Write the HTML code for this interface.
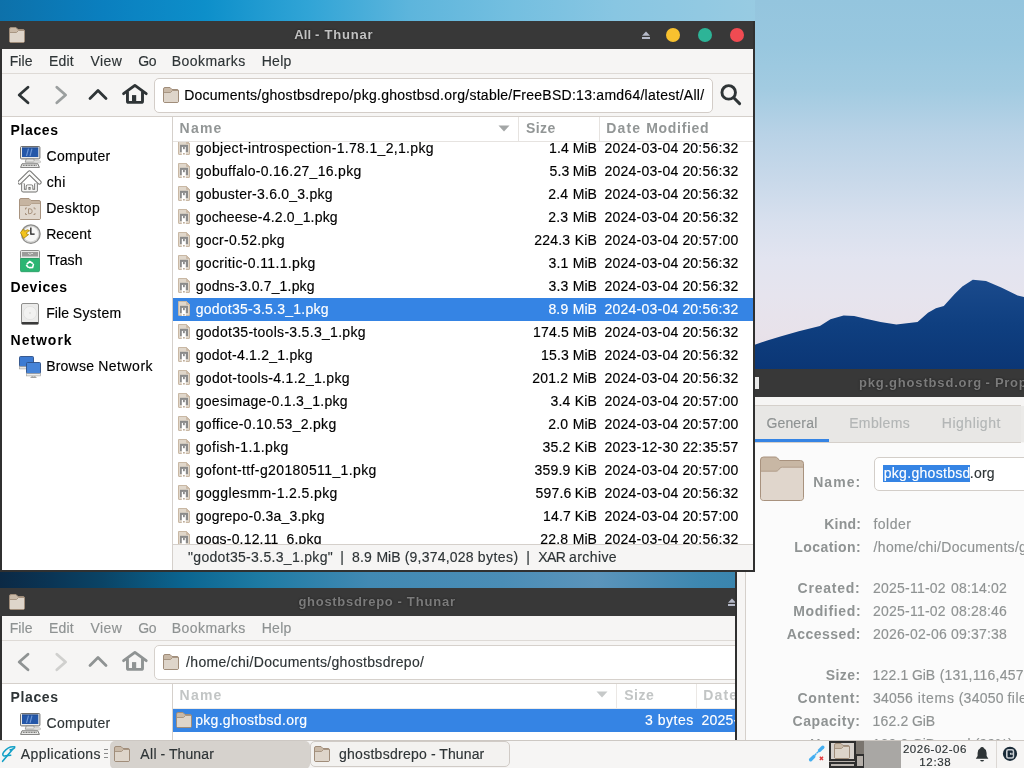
<!DOCTYPE html>
<html><head><meta charset="utf-8"><style>
html,body{margin:0;padding:0;width:1024px;height:768px;overflow:hidden;background:#0a6ea9;}
body{position:relative;font-family:"Liberation Sans",sans-serif;}
.r{position:absolute;display:block;}
.t{position:absolute;line-height:0;white-space:pre;}
#root{position:absolute;left:0;top:0;width:1024px;height:768px;overflow:hidden;will-change:transform;}
</style></head><body><div id="root">

<svg class="r" style="left:0;top:0" width="1024" height="768" viewBox="0 0 1024 768">
<defs>
<linearGradient id="gtop" x1="0" y1="0" x2="1024" y2="0" gradientUnits="userSpaceOnUse">
<stop offset="0" stop-color="#0d71aa"/><stop offset="0.1" stop-color="#0a7fbf"/><stop offset="0.2" stop-color="#0d8fca"/>
<stop offset="0.3" stop-color="#30a4d6"/><stop offset="0.4" stop-color="#5db5dc"/><stop offset="0.5" stop-color="#74bfe0"/>
<stop offset="0.6" stop-color="#88c6e2"/><stop offset="0.74" stop-color="#98cbe2"/><stop offset="0.88" stop-color="#96c6dd"/>
<stop offset="1" stop-color="#88bcda"/>
</linearGradient>
<linearGradient id="gsky" x1="0" y1="0" x2="0" y2="370" gradientUnits="userSpaceOnUse">
<stop offset="0" stop-color="#94c5de"/><stop offset="0.12" stop-color="#98c7df"/><stop offset="0.24" stop-color="#a2cbe1"/>
<stop offset="0.36" stop-color="#b8d2e6"/><stop offset="0.49" stop-color="#c9d9ea"/><stop offset="0.6" stop-color="#d8e0ee"/>
<stop offset="0.7" stop-color="#e2e4f0"/><stop offset="0.8" stop-color="#e6e4ee"/><stop offset="0.9" stop-color="#e8e2ea"/>
<stop offset="1" stop-color="#e6dde6"/>
</linearGradient>
<linearGradient id="gmtn" x1="0" y1="280" x2="0" y2="370" gradientUnits="userSpaceOnUse">
<stop offset="0" stop-color="#1a4a8c"/><stop offset="0.5" stop-color="#0f3f80"/><stop offset="1" stop-color="#0b3675"/>
</linearGradient>
<linearGradient id="ggap" x1="0" y1="0" x2="737" y2="0" gradientUnits="userSpaceOnUse">
<stop offset="0" stop-color="#0b2945"/><stop offset="0.07" stop-color="#0a3555"/><stop offset="0.14" stop-color="#0a4466"/>
<stop offset="0.25" stop-color="#0b6590"/><stop offset="0.35" stop-color="#1d7aa3"/><stop offset="0.5" stop-color="#4189b3"/>
<stop offset="0.68" stop-color="#4a8db6"/><stop offset="0.81" stop-color="#5b94bb"/><stop offset="0.95" stop-color="#3d87b0"/>
<stop offset="1" stop-color="#3a85ae"/>
</linearGradient>
</defs>
<rect x="0" y="0" width="1024" height="768" fill="url(#gtop)"/>
<rect x="755" y="0" width="269" height="370" fill="url(#gsky)"/>
<rect x="0" y="21" width="755" height="0" fill="url(#gtop)"/>
<path d="M754,344.9 L767.2,340.4 L780.4,336.5 L798.8,331.2 L819.9,325.9 L830.5,319.3 L843.6,315.4 L854.2,315.9 L864.7,318.5 L880.5,322 L896.4,324.6 L906.9,323.3 L917.5,322 L928,312.7 L935.9,308.2 L943.8,306.1 L954.4,294.3 L962.3,286.4 L972.8,279.8 L986,281.1 L1001.8,287.7 L1017.6,295.6 L1024,297 L1024,370 L754,370 Z" fill="url(#gmtn)"/>
<rect x="0" y="572" width="737" height="16" fill="url(#ggap)"/>
</svg>
<div class="r" style="left:735px;top:369px;width:289px;height:371px;background:#303030;"></div>
<div class="r" style="left:735px;top:369px;width:289px;height:28px;background:#383838;"></div>
<div class="t" style="left:859.04px;top:383px;font-size:13px;letter-spacing:0.828px;color:#7b7b7b;font-weight:bold;text-shadow:0 0 2px #1c1c1c;">pkg.ghostbsd.org</div><div class="t" style="left:985.38px;top:383px;font-size:13px;letter-spacing:0.672px;color:#7b7b7b;font-weight:bold;text-shadow:0 0 2px #1c1c1c;">-</div><div class="t" style="left:995.02px;top:383px;font-size:13px;letter-spacing:0.669px;color:#7b7b7b;font-weight:bold;text-shadow:0 0 2px #1c1c1c;">Properties</div>
<div class="r" style="left:755px;top:377px;width:4px;height:12px;background:#e8e8e8;"></div>
<div class="r" style="left:737px;top:397px;width:287px;height:343px;background:#f6f5f4;"></div>
<div class="r" style="left:746px;top:405px;width:275px;height:1px;background:#d5d0cb;"></div>
<div class="r" style="left:746px;top:406px;width:275px;height:36px;background:#e8e7e5;"></div>
<div class="r" style="left:1021px;top:406px;width:3px;height:36px;background:#ebeae8;"></div>
<div class="r" style="left:746px;top:442px;width:275px;height:1px;background:#d5d0cb;"></div>
<div class="r" style="left:746px;top:439px;width:83px;height:3px;background:#3584e4;"></div>
<div class="r" style="left:746px;top:443px;width:278px;height:297px;background:#fbfbfb;"></div>
<div class="r" style="left:745px;top:443px;width:1px;height:297px;background:#d5d0cb;"></div>
<div class="t" style="left:766.40px;top:423px;font-size:14px;letter-spacing:0.174px;color:#8f9393;-webkit-text-stroke:0.15px #8f9393;">General</div>
<div class="t" style="left:849.14px;top:423px;font-size:14px;letter-spacing:0.382px;color:#b3b6b6;-webkit-text-stroke:0.15px #b3b6b6;">Emblems</div>
<div class="t" style="left:941.84px;top:423px;font-size:14px;letter-spacing:0.505px;color:#b3b6b6;-webkit-text-stroke:0.15px #b3b6b6;">Highlight</div>
<svg class="r" style="left:760px;top:456px;" width="45" height="46" viewBox="0 0 45 46"><path d="M0.5,4 Q0.5,1 3.5,1 H15 Q16.5,1 17.5,2 L19.5,4.5 H40.5 Q43.5,4.5 43.5,7.5 V41.5 Q43.5,44.5 40.5,44.5 H3.5 Q0.5,44.5 0.5,41.5 Z" fill="#c8b7a4" stroke="#a8927e" stroke-width="1"/><path d="M1,15.2 H16 Q17.5,15.2 18.5,14 L20,12 Q21,11.2 22.5,11.2 H43 V41.5 Q43,44 40.5,44 H3.5 Q1,44 1,41.5 Z" fill="#e0d6cc"/><path d="M1,15.2 H16 Q17.5,15.2 18.5,14 L20,12 Q21,11.2 22.5,11.2 H43" fill="none" stroke="#b29f8b" stroke-width="1"/></svg>
<div class="r" style="left:874px;top:457px;width:160px;height:34px;background:#ffffff;border:1px solid #d3cec9;border-radius:5px;box-sizing:border-box;"></div>
<div class="r" style="left:883px;top:465px;width:87px;height:17px;background:#3584e4;"></div>
<div class="t" style="left:883.69px;top:473px;font-size:14px;letter-spacing:0.312px;color:#ffffff;-webkit-text-stroke:0.15px #ffffff;">pkg.ghostbsd</div>
<div class="t" style="left:969.82px;top:473px;font-size:14px;letter-spacing:0.223px;color:#2e3436;-webkit-text-stroke:0.15px #2e3436;">.org</div>
<div class="t" style="left:813.16px;top:482px;font-size:14px;letter-spacing:1.044px;color:#8f9393;font-weight:bold;">Name:</div>
<div class="t" style="left:824.16px;top:524px;font-size:14px;letter-spacing:0.250px;color:#8f9393;font-weight:bold;">Kind:</div>
<div class="t" style="left:873.40px;top:524px;font-size:14px;letter-spacing:0.500px;color:#8f9393;-webkit-text-stroke:0.15px #8f9393;">folder</div>
<div class="t" style="left:794.16px;top:547px;font-size:14px;letter-spacing:0.450px;color:#8f9393;font-weight:bold;">Location:</div>
<div class="t" style="left:873.60px;top:547px;font-size:14px;letter-spacing:0.312px;color:#8f9393;-webkit-text-stroke:0.15px #8f9393;">/home/chi/Documents/ghostbsdrepo</div>
<div class="t" style="left:797.52px;top:588px;font-size:14px;letter-spacing:0.779px;color:#8f9393;font-weight:bold;">Created:</div>
<div class="t" style="left:872.90px;top:588px;font-size:14px;letter-spacing:0.244px;color:#8f9393;-webkit-text-stroke:0.15px #8f9393;">2025-11-02</div><div class="t" style="left:951.05px;top:588px;font-size:14px;letter-spacing:0.191px;color:#8f9393;-webkit-text-stroke:0.15px #8f9393;">08:14:02</div>
<div class="t" style="left:793.16px;top:611px;font-size:14px;letter-spacing:0.648px;color:#8f9393;font-weight:bold;">Modified:</div>
<div class="t" style="left:872.90px;top:611px;font-size:14px;letter-spacing:0.244px;color:#8f9393;-webkit-text-stroke:0.15px #8f9393;">2025-11-02</div><div class="t" style="left:951.05px;top:611px;font-size:14px;letter-spacing:0.191px;color:#8f9393;-webkit-text-stroke:0.15px #8f9393;">08:28:46</div>
<div class="t" style="left:786.76px;top:634px;font-size:14px;letter-spacing:0.444px;color:#8f9393;font-weight:bold;">Accessed:</div>
<div class="t" style="left:872.90px;top:634px;font-size:14px;letter-spacing:0.244px;color:#8f9393;-webkit-text-stroke:0.15px #8f9393;">2026-02-06</div><div class="t" style="left:951.05px;top:634px;font-size:14px;letter-spacing:0.191px;color:#8f9393;-webkit-text-stroke:0.15px #8f9393;">09:37:38</div>
<div class="t" style="left:825.69px;top:675px;font-size:14px;letter-spacing:0.466px;color:#8f9393;font-weight:bold;">Size:</div>
<div class="t" style="left:872.54px;top:675px;font-size:14px;letter-spacing:0.197px;color:#8f9393;-webkit-text-stroke:0.15px #8f9393;">122.1</div><div class="t" style="left:911.90px;top:675px;font-size:14px;letter-spacing:-0.115px;color:#8f9393;-webkit-text-stroke:0.15px #8f9393;">GiB</div><div class="t" style="left:939.73px;top:675px;font-size:14px;letter-spacing:0.206px;color:#8f9393;-webkit-text-stroke:0.15px #8f9393;">(131,116,457,862</div><div class="t" style="left:1056.69px;top:675px;font-size:14px;letter-spacing:0.482px;color:#8f9393;-webkit-text-stroke:0.15px #8f9393;">bytes)</div>
<div class="t" style="left:797.52px;top:698px;font-size:14px;letter-spacing:0.688px;color:#8f9393;font-weight:bold;">Content:</div>
<div class="t" style="left:873.07px;top:698px;font-size:14px;letter-spacing:0.219px;color:#8f9393;-webkit-text-stroke:0.15px #8f9393;">34056</div><div class="t" style="left:917.66px;top:698px;font-size:14px;letter-spacing:0.713px;color:#8f9393;-webkit-text-stroke:0.15px #8f9393;">items</div><div class="t" style="left:958.73px;top:698px;font-size:14px;letter-spacing:0.240px;color:#8f9393;-webkit-text-stroke:0.15px #8f9393;">(34050</div><div class="t" style="left:1007.40px;top:698px;font-size:14px;letter-spacing:0.536px;color:#8f9393;-webkit-text-stroke:0.15px #8f9393;">files,</div><div class="t" style="left:1042.88px;top:698px;font-size:14px;letter-spacing:0.219px;color:#8f9393;-webkit-text-stroke:0.15px #8f9393;">6</div><div class="t" style="left:1055.40px;top:698px;font-size:14px;letter-spacing:0.418px;color:#8f9393;-webkit-text-stroke:0.15px #8f9393;">folders)</div>
<div class="t" style="left:792.52px;top:721px;font-size:14px;letter-spacing:0.557px;color:#8f9393;font-weight:bold;">Capacity:</div>
<div class="t" style="left:872.54px;top:721px;font-size:14px;letter-spacing:0.197px;color:#8f9393;-webkit-text-stroke:0.15px #8f9393;">162.2</div><div class="t" style="left:911.90px;top:721px;font-size:14px;letter-spacing:-0.115px;color:#8f9393;-webkit-text-stroke:0.15px #8f9393;">GiB</div>
<div class="t" style="left:810.26px;top:744px;font-size:14px;letter-spacing:0.724px;color:#8f9393;font-weight:bold;">Usage:</div>
<div class="t" style="left:872.54px;top:744px;font-size:14px;letter-spacing:0.197px;color:#8f9393;-webkit-text-stroke:0.15px #8f9393;">160.0</div><div class="t" style="left:911.90px;top:744px;font-size:14px;letter-spacing:-0.115px;color:#8f9393;-webkit-text-stroke:0.15px #8f9393;">GiB</div><div class="t" style="left:939.69px;top:744px;font-size:14px;letter-spacing:0.164px;color:#8f9393;-webkit-text-stroke:0.15px #8f9393;">used</div><div class="t" style="left:974.73px;top:744px;font-size:14px;letter-spacing:0.134px;color:#8f9393;-webkit-text-stroke:0.15px #8f9393;">(99%)</div>
<div class="r" style="left:0;top:0;width:735px;height:740px;overflow:hidden">
<div class="r" style="left:0px;top:588px;width:737px;height:152px;background:#303030;"></div>
<div class="r" style="left:0px;top:588px;width:735px;height:28px;background:#383838;"></div>
<svg class="r" style="left:9px;top:594px;" width="16" height="16" viewBox="0 0 16 16"><path d="M0.5,2 Q0.5,0.5 2,0.5 H7 L9,2.5 H14 Q15.5,2.5 15.5,4 V14 Q15.5,15.5 14,15.5 H2 Q0.5,15.5 0.5,14 Z" fill="#c9b9a7" stroke="#a08d7a" stroke-width="1"/><path d="M1,5.5 H7.5 L9.5,3.5 H15 V15 H1 Z" fill="#ded5ca"/><path d="M1,5.5 H7.5 L9.5,3.5 H15" fill="none" stroke="#a89683" stroke-width="1"/></svg>
<div class="t" style="left:298.47px;top:602px;font-size:13px;letter-spacing:0.695px;color:#7b7b7b;font-weight:bold;text-shadow:0 0 2px #1c1c1c;">ghostbsdrepo</div><div class="t" style="left:397.48px;top:602px;font-size:13px;letter-spacing:0.672px;color:#7b7b7b;font-weight:bold;text-shadow:0 0 2px #1c1c1c;">-</div><div class="t" style="left:406.86px;top:602px;font-size:13px;letter-spacing:0.826px;color:#7b7b7b;font-weight:bold;text-shadow:0 0 2px #1c1c1c;">Thunar</div>
<div class="r" style="left:2px;top:616px;width:733px;height:24px;background:#f6f5f4;"></div>
<div class="r" style="left:2px;top:640px;width:733px;height:1px;background:#dedad6;"></div>
<div class="r" style="left:2px;top:641px;width:733px;height:42px;background:#f6f5f4;"></div>
<div class="r" style="left:2px;top:683px;width:733px;height:1px;background:#d5d0cb;"></div>
<div class="t" style="left:9.69px;top:628px;font-size:14px;letter-spacing:0.113px;color:#8e9292;-webkit-text-stroke:0.15px #8e9292;">File</div>
<div class="t" style="left:48.94px;top:628px;font-size:14px;letter-spacing:0.219px;color:#8e9292;-webkit-text-stroke:0.15px #8e9292;">Edit</div>
<div class="t" style="left:90.54px;top:628px;font-size:14px;letter-spacing:0.414px;color:#8e9292;-webkit-text-stroke:0.15px #8e9292;">View</div>
<div class="t" style="left:138.20px;top:628px;font-size:14px;letter-spacing:-0.336px;color:#8e9292;-webkit-text-stroke:0.15px #8e9292;">Go</div>
<div class="t" style="left:171.74px;top:628px;font-size:14px;letter-spacing:0.444px;color:#8e9292;-webkit-text-stroke:0.15px #8e9292;">Bookmarks</div>
<div class="t" style="left:261.64px;top:628px;font-size:14px;letter-spacing:0.305px;color:#8e9292;-webkit-text-stroke:0.15px #8e9292;">Help</div>
<svg class="r" style="left:726px;top:597px;" width="12" height="12" viewBox="0 0 12 12"><path d="M2,5.7 L6,1.6 L10,5.7 Z" fill="#b6bac9"/><rect x="2" y="7" width="8" height="2" fill="#b6bac9"/></svg>
<div class="r" style="left:735px;top:588px;width:2px;height:152px;background:#303030;"></div>
<svg class="r" style="left:10px;top:647px" width="140" height="30" viewBox="10 647 140 30"><path d="M28,654.2 L19.2,662 L28,669.8" fill="none" stroke="#8f9393" stroke-width="2.8" stroke-linecap="round" stroke-linejoin="round"/><path d="M56.8,654.2 L65.6,662 L56.8,669.8" fill="none" stroke="#d0d0ce" stroke-width="2.8" stroke-linecap="round" stroke-linejoin="round"/><path d="M90,665.5 L98,657.5 L106,665.5" fill="none" stroke="#8f9393" stroke-width="2.8" stroke-linecap="round" stroke-linejoin="round"/><path d="M123.6,660.6 L134.9,652.4 L146.2,660.6" fill="none" stroke="#8f9393" stroke-width="2.9" stroke-linecap="round" stroke-linejoin="round"/><path d="M127.45,658.5 V668.2 Q127.45,669.4 128.6,669.4 H141.3 Q142.5,669.4 142.5,668.2 V658.5" fill="none" stroke="#8f9393" stroke-width="2.9" stroke-linejoin="round"/><rect x="132" y="662.1" width="4.2" height="7" fill="#8f9393"/></svg>
<div class="r" style="left:154px;top:645px;width:600px;height:35px;background:#ffffff;border:1px solid #d6d1cc;border-radius:5px;box-sizing:border-box;"></div>
<svg class="r" style="left:163px;top:654px;" width="16" height="16" viewBox="0 0 16 16"><path d="M0.5,2 Q0.5,0.5 2,0.5 H7 L9,2.5 H14 Q15.5,2.5 15.5,4 V14 Q15.5,15.5 14,15.5 H2 Q0.5,15.5 0.5,14 Z" fill="#c9b9a7" stroke="#a08d7a" stroke-width="1"/><path d="M1,5.5 H7.5 L9.5,3.5 H15 V15 H1 Z" fill="#ded5ca"/><path d="M1,5.5 H7.5 L9.5,3.5 H15" fill="none" stroke="#a89683" stroke-width="1"/></svg>
<div class="t" style="left:186.10px;top:662px;font-size:14px;letter-spacing:0.305px;color:#2e3436;-webkit-text-stroke:0.15px #2e3436;">/home/chi/Documents/ghostbsdrepo/</div>
<div class="r" style="left:2px;top:684px;width:170px;height:56px;background:#ffffff;"></div>
<div class="r" style="left:172px;top:684px;width:1px;height:56px;background:#d5d0cb;"></div>
<div class="r" style="left:173px;top:684px;width:562px;height:56px;background:#ffffff;"></div>
<div class="r" style="left:173px;top:708px;width:562px;height:1px;background:#eeebe8;"></div>
<div class="r" style="left:616px;top:684px;width:1px;height:24px;background:#ebe8e5;"></div>
<div class="r" style="left:696px;top:684px;width:1px;height:24px;background:#ebe8e5;"></div>
<div class="t" style="left:179.56px;top:695px;font-size:14px;letter-spacing:1.219px;color:#c2c5c5;font-weight:bold;">Name</div>
<svg class="r" style="left:596px;top:691px;" width="12" height="7" viewBox="0 0 12 7"><path d="M0.5,0.5 H11.5 L6,6.5 Z" fill="#c6c9c9"/></svg>
<div class="t" style="left:624.19px;top:695px;font-size:14px;letter-spacing:0.496px;color:#c2c5c5;font-weight:bold;">Size</div>
<div class="t" style="left:703.26px;top:695px;font-size:14px;letter-spacing:1.168px;color:#c2c5c5;font-weight:bold;">Date</div><div class="t" style="left:743.26px;top:695px;font-size:14px;letter-spacing:0.686px;color:#c2c5c5;font-weight:bold;">Modified</div>
<div class="t" style="left:10.56px;top:697px;font-size:14px;letter-spacing:0.607px;color:#2e3436;font-weight:bold;">Places</div>
<svg class="r" style="left:20px;top:713px;" width="23" height="23" viewBox="0 0 23 23"><rect x="0.5" y="0.5" width="19.4" height="12.4" rx="1" fill="#ececea" stroke="#6f6f6d" stroke-width="1"/><rect x="2" y="1.8" width="16.3" height="9.2" fill="#2457a8"/><path d="M8.5,2.5 L6.5,10 M12,2.5 L10,10" stroke="#6d97d6" stroke-width="1.1"/><path d="M2,1.8 H18.3" stroke="#1a3f80" stroke-width="0.8"/><path d="M6.2,13 H13.8 L14.8,16.2 H5.2 Z" fill="#e6e6e4" stroke="#8a8a88" stroke-width="0.8"/><ellipse cx="17" cy="15.8" rx="4" ry="1.3" fill="#e2e2e0" stroke="#b9b9b6" stroke-width="0.6"/><path d="M0.6,21.4 L2,17.8 H17.8 L19.4,21.4 Z" fill="#f6f6f4" stroke="#6a6a68" stroke-width="0.9"/><path d="M2.8,19.3 H17.2" stroke="#5a5a58" stroke-width="1" stroke-dasharray="1.1,0.5"/></svg>
<div class="t" style="left:46.58px;top:723px;font-size:14px;letter-spacing:0.320px;color:#2e3436;-webkit-text-stroke:0.15px #2e3436;">Computer</div>
<div class="r" style="left:173px;top:709px;width:562px;height:23px;background:#3584e4;"></div>
<svg class="r" style="left:176px;top:712px;" width="16" height="16" viewBox="0 0 16 16"><path d="M0.5,2 Q0.5,0.5 2,0.5 H7 L9,2.5 H14 Q15.5,2.5 15.5,4 V14 Q15.5,15.5 14,15.5 H2 Q0.5,15.5 0.5,14 Z" fill="#c9b9a7" stroke="#a08d7a" stroke-width="1"/><path d="M1,5.5 H7.5 L9.5,3.5 H15 V15 H1 Z" fill="#ded5ca"/><path d="M1,5.5 H7.5 L9.5,3.5 H15" fill="none" stroke="#a89683" stroke-width="1"/></svg>
<div class="t" style="left:195.19px;top:720px;font-size:14px;letter-spacing:0.290px;color:#ffffff;-webkit-text-stroke:0.15px #ffffff;">pkg.ghostbsd.org</div>
<div class="t" style="left:645.07px;top:720px;font-size:14px;letter-spacing:0.219px;color:#ffffff;-webkit-text-stroke:0.15px #ffffff;">3</div><div class="t" style="left:657.69px;top:720px;font-size:14px;letter-spacing:0.509px;color:#ffffff;-webkit-text-stroke:0.15px #ffffff;">bytes</div>
<div class="r" style="left:0;top:0;width:735px;height:740px;overflow:hidden"><div class="t" style="left:701.40px;top:720px;font-size:14px;letter-spacing:0.244px;color:#ffffff;-webkit-text-stroke:0.15px #ffffff;">2025-11-02</div><div class="t" style="left:779.55px;top:720px;font-size:14px;letter-spacing:0.191px;color:#ffffff;-webkit-text-stroke:0.15px #ffffff;">08:28:46</div></div>
</div>
<div class="r" style="left:0px;top:21px;width:755px;height:551px;background:#303030;"></div>
<div class="r" style="left:0px;top:21px;width:753px;height:28px;background:#383838;"></div>
<svg class="r" style="left:9px;top:27px;" width="16" height="16" viewBox="0 0 16 16"><path d="M0.5,2 Q0.5,0.5 2,0.5 H7 L9,2.5 H14 Q15.5,2.5 15.5,4 V14 Q15.5,15.5 14,15.5 H2 Q0.5,15.5 0.5,14 Z" fill="#c9b9a7" stroke="#a08d7a" stroke-width="1"/><path d="M1,5.5 H7.5 L9.5,3.5 H15 V15 H1 Z" fill="#ded5ca"/><path d="M1,5.5 H7.5 L9.5,3.5 H15" fill="none" stroke="#a89683" stroke-width="1"/></svg>
<div class="t" style="left:294.27px;top:35px;font-size:13px;letter-spacing:0.130px;color:#c2c2c2;font-weight:bold;text-shadow:0 0 2px #1c1c1c;">All</div><div class="t" style="left:315.08px;top:35px;font-size:13px;letter-spacing:0.672px;color:#c2c2c2;font-weight:bold;text-shadow:0 0 2px #1c1c1c;">-</div><div class="t" style="left:324.46px;top:35px;font-size:13px;letter-spacing:0.826px;color:#c2c2c2;font-weight:bold;text-shadow:0 0 2px #1c1c1c;">Thunar</div>
<div class="r" style="left:2px;top:49px;width:751px;height:24px;background:#f6f5f4;"></div>
<div class="r" style="left:2px;top:73px;width:751px;height:1px;background:#dedad6;"></div>
<div class="r" style="left:2px;top:74px;width:751px;height:42px;background:#f6f5f4;"></div>
<div class="r" style="left:2px;top:116px;width:751px;height:1px;background:#d5d0cb;"></div>
<div class="t" style="left:9.69px;top:61px;font-size:14px;letter-spacing:0.113px;color:#2e3436;-webkit-text-stroke:0.15px #2e3436;">File</div>
<div class="t" style="left:48.94px;top:61px;font-size:14px;letter-spacing:0.219px;color:#2e3436;-webkit-text-stroke:0.15px #2e3436;">Edit</div>
<div class="t" style="left:90.54px;top:61px;font-size:14px;letter-spacing:0.414px;color:#2e3436;-webkit-text-stroke:0.15px #2e3436;">View</div>
<div class="t" style="left:138.20px;top:61px;font-size:14px;letter-spacing:-0.336px;color:#2e3436;-webkit-text-stroke:0.15px #2e3436;">Go</div>
<div class="t" style="left:171.74px;top:61px;font-size:14px;letter-spacing:0.444px;color:#2e3436;-webkit-text-stroke:0.15px #2e3436;">Bookmarks</div>
<div class="t" style="left:261.64px;top:61px;font-size:14px;letter-spacing:0.305px;color:#2e3436;-webkit-text-stroke:0.15px #2e3436;">Help</div>
<svg class="r" style="left:640px;top:30px;" width="12" height="12" viewBox="0 0 12 12"><path d="M2,5.7 L6,1.6 L10,5.7 Z" fill="#b6bac9"/><rect x="2" y="7" width="8" height="2" fill="#b6bac9"/></svg>
<svg class="r" style="left:666px;top:28px;" width="14" height="14" viewBox="0 0 14 14"><circle cx="7" cy="7" r="7" fill="#f8c12f"/></svg>
<svg class="r" style="left:698px;top:28px;" width="14" height="14" viewBox="0 0 14 14"><circle cx="7" cy="7" r="7" fill="#2db497"/></svg>
<svg class="r" style="left:730px;top:28px;" width="14" height="14" viewBox="0 0 14 14"><circle cx="7" cy="7" r="7" fill="#f04b52"/></svg>
<svg class="r" style="left:10px;top:80px" width="140" height="30" viewBox="10 80 140 30"><path d="M28,87.2 L19.2,95 L28,102.8" fill="none" stroke="#2e3436" stroke-width="2.8" stroke-linecap="round" stroke-linejoin="round"/><path d="M56.8,87.2 L65.6,95 L56.8,102.8" fill="none" stroke="#9b9f9f" stroke-width="2.8" stroke-linecap="round" stroke-linejoin="round"/><path d="M90,98.5 L98,90.5 L106,98.5" fill="none" stroke="#2e3436" stroke-width="2.8" stroke-linecap="round" stroke-linejoin="round"/><path d="M123.6,93.6 L134.9,85.4 L146.2,93.6" fill="none" stroke="#2e3436" stroke-width="2.9" stroke-linecap="round" stroke-linejoin="round"/><path d="M127.45,91.5 V101.2 Q127.45,102.4 128.6,102.4 H141.3 Q142.5,102.4 142.5,101.2 V91.5" fill="none" stroke="#2e3436" stroke-width="2.9" stroke-linejoin="round"/><rect x="132" y="95.1" width="4.2" height="7" fill="#2e3436"/></svg>
<div class="r" style="left:154px;top:78px;width:559px;height:35px;background:#ffffff;border:1px solid #d3cdc8;border-radius:5px;box-sizing:border-box;"></div>
<svg class="r" style="left:163px;top:87px;" width="16" height="16" viewBox="0 0 16 16"><path d="M0.5,2 Q0.5,0.5 2,0.5 H7 L9,2.5 H14 Q15.5,2.5 15.5,4 V14 Q15.5,15.5 14,15.5 H2 Q0.5,15.5 0.5,14 Z" fill="#c9b9a7" stroke="#a08d7a" stroke-width="1"/><path d="M1,5.5 H7.5 L9.5,3.5 H15 V15 H1 Z" fill="#ded5ca"/><path d="M1,5.5 H7.5 L9.5,3.5 H15" fill="none" stroke="#a89683" stroke-width="1"/></svg>
<div class="t" style="left:184.14px;top:95px;font-size:14px;letter-spacing:0.264px;color:#000000;-webkit-text-stroke:0.15px #000000;">Documents/ghostbsdrepo/pkg.ghostbsd.org/stable/FreeBSD:13:amd64/latest/All/</div>
<svg class="r" style="left:716px;top:80px" width="30" height="30" viewBox="716 80 30 30"><circle cx="728.7" cy="92.4" r="6.75" fill="none" stroke="#2e3436" stroke-width="2.9"/><path d="M734,98 L739.6,103.6" stroke="#2e3436" stroke-width="3" stroke-linecap="round"/></svg>
<div class="r" style="left:2px;top:117px;width:170px;height:453px;background:#ffffff;"></div>
<div class="r" style="left:172px;top:117px;width:1px;height:453px;background:#d5d0cb;"></div>
<div class="t" style="left:10.56px;top:130px;font-size:14px;letter-spacing:0.607px;color:#000000;font-weight:bold;">Places</div>
<svg class="r" style="left:20px;top:146px;" width="23" height="23" viewBox="0 0 23 23"><rect x="0.5" y="0.5" width="19.4" height="12.4" rx="1" fill="#ececea" stroke="#6f6f6d" stroke-width="1"/><rect x="2" y="1.8" width="16.3" height="9.2" fill="#2457a8"/><path d="M8.5,2.5 L6.5,10 M12,2.5 L10,10" stroke="#6d97d6" stroke-width="1.1"/><path d="M2,1.8 H18.3" stroke="#1a3f80" stroke-width="0.8"/><path d="M6.2,13 H13.8 L14.8,16.2 H5.2 Z" fill="#e6e6e4" stroke="#8a8a88" stroke-width="0.8"/><ellipse cx="17" cy="15.8" rx="4" ry="1.3" fill="#e2e2e0" stroke="#b9b9b6" stroke-width="0.6"/><path d="M0.6,21.4 L2,17.8 H17.8 L19.4,21.4 Z" fill="#f6f6f4" stroke="#6a6a68" stroke-width="0.9"/><path d="M2.8,19.3 H17.2" stroke="#5a5a58" stroke-width="1" stroke-dasharray="1.1,0.5"/></svg>
<div class="t" style="left:46.58px;top:156px;font-size:14px;letter-spacing:0.320px;color:#000000;-webkit-text-stroke:0.15px #000000;">Computer</div>
<svg class="r" style="left:18px;top:170px;" width="24" height="24" viewBox="0 0 24 24"><path d="M1.6,12.4 L11.5,2.6 L21.4,12.4" fill="none" stroke="#747472" stroke-width="4.4" stroke-linecap="round" stroke-linejoin="round"/><path d="M1.6,12.4 L11.5,2.6 L21.4,12.4" fill="none" stroke="#fbfbfa" stroke-width="2.4" stroke-linecap="round" stroke-linejoin="round"/><path d="M5,13.5 V20.6 H18 V13.5 M9.5,20.6 V16.2 H13.5 V20.6" fill="none" stroke="#6f6f6d" stroke-width="3.6" stroke-linejoin="round"/><path d="M5,13.5 V20.6 H18 V13.5 M9.5,20.6 V16.2 H13.5 V20.6" fill="none" stroke="#f7f7f6" stroke-width="1.8" stroke-linejoin="round"/></svg>
<div class="t" style="left:46.71px;top:182px;font-size:14px;letter-spacing:0.370px;color:#000000;-webkit-text-stroke:0.15px #000000;">chi</div>
<svg class="r" style="left:19px;top:198px;" width="23" height="23" viewBox="0 0 23 23"><path d="M0.5,2 Q0.5,0.5 2,0.5 H10 L12,2.5 H20 Q21.5,2.5 21.5,4 V20 Q21.5,21.5 20,21.5 H2 Q0.5,21.5 0.5,20 Z" fill="#c6b4a1" stroke="#a8937f" stroke-width="1"/><path d="M1,7.5 H10.5 L12.5,5.5 H21 V21 H1 Z" fill="#e1d8ce"/><path d="M1,7.5 H10.5 L12.5,5.5 H21" fill="none" stroke="#b5a28e" stroke-width="1"/><path d="M6.5,11.5 V10 H8 M16,11.5 V10 H14.5 M6.5,15 V16.5 H8 M16,15 V16.5 H14.5" stroke="#a8937f" stroke-width="1" fill="none"/><path d="M9.5,10.8 H11 Q13.2,10.8 13.2,13.2 Q13.2,15.7 11,15.7 H9.5 Z" fill="none" stroke="#a8937f" stroke-width="1"/></svg>
<div class="t" style="left:46.14px;top:208px;font-size:14px;letter-spacing:0.379px;color:#000000;-webkit-text-stroke:0.15px #000000;">Desktop</div>
<svg class="r" style="left:20px;top:223px;" width="23" height="23" viewBox="0 0 23 23"><circle cx="10.85" cy="11.1" r="9.9" fill="#8c8c8a"/><circle cx="10.85" cy="11.1" r="8.6" fill="#d4d4d2"/><circle cx="10.85" cy="11.1" r="7.4" fill="#f7f7f6"/><path d="M10.85,4.6 V11.1 H14.6" stroke="#1a1a1a" stroke-width="1.3" fill="none"/><path d="M0.4,9.6 L3.6,5.9 L4.6,8.2 Q7.8,5.4 9.6,7.8 Q6.8,8.3 6.4,10.8 L8.6,11.6 L3.6,15.4 Z" fill="#f2c31d" stroke="#a88412" stroke-width="0.8" stroke-linejoin="round"/></svg>
<div class="t" style="left:46.14px;top:234px;font-size:14px;letter-spacing:0.109px;color:#000000;-webkit-text-stroke:0.15px #000000;">Recent</div>
<svg class="r" style="left:20px;top:250px;" width="21" height="23" viewBox="0 0 21 23"><rect x="0.5" y="0.5" width="19" height="8" rx="1" fill="#e8e8e6" stroke="#8e8e8c" stroke-width="1"/><rect x="2" y="2" width="16" height="4.5" fill="#9b9b99"/><path d="M8,3 L10,4.5 L12,3 L13,4" stroke="#e8e8e6" stroke-width="0.8" fill="none"/><path d="M0.5,8.5 H19.5 V20.5 Q19.5,21.7 18.3,21.7 H1.7 Q0.5,21.7 0.5,20.5 Z" fill="#2bb573" stroke="#229a60" stroke-width="0.8"/><path d="M7.3,13.6 L9.8,11.6 L12.4,13.2 M13.4,14.4 L12.6,17.4 L9.6,17.6 M8.2,17.2 L6.6,15.4" stroke="#ffffff" stroke-width="1.6" fill="none" stroke-linecap="round"/></svg>
<div class="t" style="left:46.99px;top:260px;font-size:14px;letter-spacing:0.047px;color:#000000;-webkit-text-stroke:0.15px #000000;">Trash</div>
<div class="t" style="left:10.56px;top:287px;font-size:14px;letter-spacing:0.585px;color:#000000;font-weight:bold;">Devices</div>
<svg class="r" style="left:21px;top:303px;" width="19" height="23" viewBox="0 0 19 23"><rect x="0.5" y="0.5" width="17" height="20.4" rx="1.5" fill="#ebebea" stroke="#8f8f8d" stroke-width="1"/><circle cx="9" cy="10" r="6.6" fill="#f2f2f1" stroke="#dcdcda" stroke-width="0.6"/><circle cx="9" cy="10" r="0.8" fill="#d0d0ce"/><rect x="0.5" y="19" width="17" height="2.6" rx="0.8" fill="#3a3a3a"/></svg>
<div class="t" style="left:46.14px;top:313px;font-size:14px;letter-spacing:0.113px;color:#000000;-webkit-text-stroke:0.15px #000000;">File</div><div class="t" style="left:72.66px;top:313px;font-size:14px;letter-spacing:0.388px;color:#000000;-webkit-text-stroke:0.15px #000000;">System</div>
<div class="t" style="left:10.56px;top:340px;font-size:14px;letter-spacing:0.969px;color:#000000;font-weight:bold;">Network</div>
<svg class="r" style="left:19px;top:356px;" width="23" height="23" viewBox="0 0 23 23"><rect x="0.5" y="0.5" width="14" height="10" rx="1" fill="#3d7bd2" stroke="#2c4f86" stroke-width="0.9"/><rect x="0.5" y="10.5" width="14" height="2.4" fill="#e8e8e6" stroke="#9c9c9a" stroke-width="0.6"/><rect x="7.5" y="6.5" width="14" height="11" rx="1" fill="#4684d8" stroke="#2c4f86" stroke-width="0.9"/><rect x="7.5" y="17.5" width="14" height="2.4" fill="#eeeeec" stroke="#9c9c9a" stroke-width="0.6"/><path d="M13,20 V21 H16 V20 M11.5,21.5 H17.5" stroke="#9c9c9a" stroke-width="0.9" fill="none"/></svg>
<div class="t" style="left:46.14px;top:366px;font-size:14px;letter-spacing:0.221px;color:#000000;-webkit-text-stroke:0.15px #000000;">Browse</div><div class="t" style="left:98.14px;top:366px;font-size:14px;letter-spacing:0.525px;color:#000000;-webkit-text-stroke:0.15px #000000;">Network</div>
<div class="r" style="left:173px;top:117px;width:580px;height:24px;background:#ffffff;"></div>
<div class="r" style="left:173px;top:141px;width:580px;height:1px;background:#e6e3e0;"></div>
<div class="r" style="left:518px;top:117px;width:1px;height:24px;background:#e6e3e0;"></div>
<div class="r" style="left:599px;top:117px;width:1px;height:24px;background:#e6e3e0;"></div>
<div class="t" style="left:179.56px;top:128px;font-size:14px;letter-spacing:1.219px;color:#929696;font-weight:bold;">Name</div>
<svg class="r" style="left:498px;top:125px;" width="12" height="7" viewBox="0 0 12 7"><path d="M0.5,0.5 H11.5 L6,6.5 Z" fill="#a3a6a6"/></svg>
<div class="t" style="left:525.89px;top:128px;font-size:14px;letter-spacing:0.496px;color:#929696;font-weight:bold;">Size</div>
<div class="t" style="left:606.26px;top:128px;font-size:14px;letter-spacing:1.168px;color:#929696;font-weight:bold;">Date</div><div class="t" style="left:646.26px;top:128px;font-size:14px;letter-spacing:0.686px;color:#929696;font-weight:bold;">Modified</div>
<div class="r" style="left:173px;top:142px;width:580px;height:402px;background:#ffffff;"></div>
<div class="r" style="left:0;top:142px;width:753px;height:402px;overflow:hidden">
<svg class="r" style="left:176px;top:-2px;" width="16" height="16" viewBox="0 0 16 16"><path d="M2.5,0.5 H10.5 L13.5,3.5 V14 Q13.5,14.5 13,14.5 H3 Q2.5,14.5 2.5,14 Z" fill="#e0d7cb" stroke="#c9b8a4" stroke-width="1"/><path d="M10.5,0.5 V3.5 H13.5 Z" fill="#cbb9a5" stroke="#c9b8a4" stroke-width="0.8"/><rect x="4" y="4.8" width="8" height="7.3" fill="#8a8a8a"/><rect x="5.8" y="6.9" width="4" height="8.1" fill="#ffffff"/><rect x="7" y="7" width="1.8" height="2.2" fill="#8a8a8a"/><rect x="7" y="13.1" width="1.8" height="1.4" fill="#b8a590"/></svg>
<div class="t" style="left:195.71px;top:6px;font-size:14px;letter-spacing:0.323px;color:#000000;-webkit-text-stroke:0.15px #000000;">gobject-introspection-1.78.1_2,1.pkg</div>
<div class="t" style="left:548.94px;top:6px;font-size:14px;letter-spacing:0.182px;color:#000000;-webkit-text-stroke:0.15px #000000;">1.4</div><div class="t" style="left:572.84px;top:6px;font-size:14px;letter-spacing:-0.036px;color:#000000;-webkit-text-stroke:0.15px #000000;">MiB</div>
<div class="t" style="left:604.40px;top:6px;font-size:14px;letter-spacing:0.244px;color:#000000;-webkit-text-stroke:0.15px #000000;">2024-03-04</div><div class="t" style="left:682.40px;top:6px;font-size:14px;letter-spacing:0.191px;color:#000000;-webkit-text-stroke:0.15px #000000;">20:56:32</div>
<svg class="r" style="left:176px;top:21px;" width="16" height="16" viewBox="0 0 16 16"><path d="M2.5,0.5 H10.5 L13.5,3.5 V14 Q13.5,14.5 13,14.5 H3 Q2.5,14.5 2.5,14 Z" fill="#e0d7cb" stroke="#c9b8a4" stroke-width="1"/><path d="M10.5,0.5 V3.5 H13.5 Z" fill="#cbb9a5" stroke="#c9b8a4" stroke-width="0.8"/><rect x="4" y="4.8" width="8" height="7.3" fill="#8a8a8a"/><rect x="5.8" y="6.9" width="4" height="8.1" fill="#ffffff"/><rect x="7" y="7" width="1.8" height="2.2" fill="#8a8a8a"/><rect x="7" y="13.1" width="1.8" height="1.4" fill="#b8a590"/></svg>
<div class="t" style="left:195.71px;top:29px;font-size:14px;letter-spacing:0.303px;color:#000000;-webkit-text-stroke:0.15px #000000;">gobuffalo-0.16.27_16.pkg</div>
<div class="t" style="left:549.44px;top:29px;font-size:14px;letter-spacing:0.182px;color:#000000;-webkit-text-stroke:0.15px #000000;">5.3</div><div class="t" style="left:572.84px;top:29px;font-size:14px;letter-spacing:-0.036px;color:#000000;-webkit-text-stroke:0.15px #000000;">MiB</div>
<div class="t" style="left:604.40px;top:29px;font-size:14px;letter-spacing:0.244px;color:#000000;-webkit-text-stroke:0.15px #000000;">2024-03-04</div><div class="t" style="left:682.40px;top:29px;font-size:14px;letter-spacing:0.191px;color:#000000;-webkit-text-stroke:0.15px #000000;">20:56:32</div>
<svg class="r" style="left:176px;top:44px;" width="16" height="16" viewBox="0 0 16 16"><path d="M2.5,0.5 H10.5 L13.5,3.5 V14 Q13.5,14.5 13,14.5 H3 Q2.5,14.5 2.5,14 Z" fill="#e0d7cb" stroke="#c9b8a4" stroke-width="1"/><path d="M10.5,0.5 V3.5 H13.5 Z" fill="#cbb9a5" stroke="#c9b8a4" stroke-width="0.8"/><rect x="4" y="4.8" width="8" height="7.3" fill="#8a8a8a"/><rect x="5.8" y="6.9" width="4" height="8.1" fill="#ffffff"/><rect x="7" y="7" width="1.8" height="2.2" fill="#8a8a8a"/><rect x="7" y="13.1" width="1.8" height="1.4" fill="#b8a590"/></svg>
<div class="t" style="left:195.71px;top:52px;font-size:14px;letter-spacing:0.237px;color:#000000;-webkit-text-stroke:0.15px #000000;">gobuster-3.6.0_3.pkg</div>
<div class="t" style="left:548.30px;top:52px;font-size:14px;letter-spacing:0.182px;color:#000000;-webkit-text-stroke:0.15px #000000;">2.4</div><div class="t" style="left:572.84px;top:52px;font-size:14px;letter-spacing:-0.036px;color:#000000;-webkit-text-stroke:0.15px #000000;">MiB</div>
<div class="t" style="left:604.40px;top:52px;font-size:14px;letter-spacing:0.244px;color:#000000;-webkit-text-stroke:0.15px #000000;">2024-03-04</div><div class="t" style="left:682.40px;top:52px;font-size:14px;letter-spacing:0.191px;color:#000000;-webkit-text-stroke:0.15px #000000;">20:56:32</div>
<svg class="r" style="left:176px;top:67px;" width="16" height="16" viewBox="0 0 16 16"><path d="M2.5,0.5 H10.5 L13.5,3.5 V14 Q13.5,14.5 13,14.5 H3 Q2.5,14.5 2.5,14 Z" fill="#e0d7cb" stroke="#c9b8a4" stroke-width="1"/><path d="M10.5,0.5 V3.5 H13.5 Z" fill="#cbb9a5" stroke="#c9b8a4" stroke-width="0.8"/><rect x="4" y="4.8" width="8" height="7.3" fill="#8a8a8a"/><rect x="5.8" y="6.9" width="4" height="8.1" fill="#ffffff"/><rect x="7" y="7" width="1.8" height="2.2" fill="#8a8a8a"/><rect x="7" y="13.1" width="1.8" height="1.4" fill="#b8a590"/></svg>
<div class="t" style="left:195.71px;top:75px;font-size:14px;letter-spacing:0.176px;color:#000000;-webkit-text-stroke:0.15px #000000;">gocheese-4.2.0_1.pkg</div>
<div class="t" style="left:548.30px;top:75px;font-size:14px;letter-spacing:0.182px;color:#000000;-webkit-text-stroke:0.15px #000000;">2.3</div><div class="t" style="left:572.84px;top:75px;font-size:14px;letter-spacing:-0.036px;color:#000000;-webkit-text-stroke:0.15px #000000;">MiB</div>
<div class="t" style="left:604.40px;top:75px;font-size:14px;letter-spacing:0.244px;color:#000000;-webkit-text-stroke:0.15px #000000;">2024-03-04</div><div class="t" style="left:682.40px;top:75px;font-size:14px;letter-spacing:0.191px;color:#000000;-webkit-text-stroke:0.15px #000000;">20:56:32</div>
<svg class="r" style="left:176px;top:90px;" width="16" height="16" viewBox="0 0 16 16"><path d="M2.5,0.5 H10.5 L13.5,3.5 V14 Q13.5,14.5 13,14.5 H3 Q2.5,14.5 2.5,14 Z" fill="#e0d7cb" stroke="#c9b8a4" stroke-width="1"/><path d="M10.5,0.5 V3.5 H13.5 Z" fill="#cbb9a5" stroke="#c9b8a4" stroke-width="0.8"/><rect x="4" y="4.8" width="8" height="7.3" fill="#8a8a8a"/><rect x="5.8" y="6.9" width="4" height="8.1" fill="#ffffff"/><rect x="7" y="7" width="1.8" height="2.2" fill="#8a8a8a"/><rect x="7" y="13.1" width="1.8" height="1.4" fill="#b8a590"/></svg>
<div class="t" style="left:195.71px;top:98px;font-size:14px;letter-spacing:0.264px;color:#000000;-webkit-text-stroke:0.15px #000000;">gocr-0.52.pkg</div>
<div class="t" style="left:534.30px;top:98px;font-size:14px;letter-spacing:0.197px;color:#000000;-webkit-text-stroke:0.15px #000000;">224.3</div><div class="t" style="left:574.84px;top:98px;font-size:14px;letter-spacing:0.068px;color:#000000;-webkit-text-stroke:0.15px #000000;">KiB</div>
<div class="t" style="left:604.40px;top:98px;font-size:14px;letter-spacing:0.244px;color:#000000;-webkit-text-stroke:0.15px #000000;">2024-03-04</div><div class="t" style="left:682.40px;top:98px;font-size:14px;letter-spacing:0.191px;color:#000000;-webkit-text-stroke:0.15px #000000;">20:57:00</div>
<svg class="r" style="left:176px;top:113px;" width="16" height="16" viewBox="0 0 16 16"><path d="M2.5,0.5 H10.5 L13.5,3.5 V14 Q13.5,14.5 13,14.5 H3 Q2.5,14.5 2.5,14 Z" fill="#e0d7cb" stroke="#c9b8a4" stroke-width="1"/><path d="M10.5,0.5 V3.5 H13.5 Z" fill="#cbb9a5" stroke="#c9b8a4" stroke-width="0.8"/><rect x="4" y="4.8" width="8" height="7.3" fill="#8a8a8a"/><rect x="5.8" y="6.9" width="4" height="8.1" fill="#ffffff"/><rect x="7" y="7" width="1.8" height="2.2" fill="#8a8a8a"/><rect x="7" y="13.1" width="1.8" height="1.4" fill="#b8a590"/></svg>
<div class="t" style="left:195.71px;top:121px;font-size:14px;letter-spacing:0.350px;color:#000000;-webkit-text-stroke:0.15px #000000;">gocritic-0.11.1.pkg</div>
<div class="t" style="left:548.47px;top:121px;font-size:14px;letter-spacing:0.182px;color:#000000;-webkit-text-stroke:0.15px #000000;">3.1</div><div class="t" style="left:572.84px;top:121px;font-size:14px;letter-spacing:-0.036px;color:#000000;-webkit-text-stroke:0.15px #000000;">MiB</div>
<div class="t" style="left:604.40px;top:121px;font-size:14px;letter-spacing:0.244px;color:#000000;-webkit-text-stroke:0.15px #000000;">2024-03-04</div><div class="t" style="left:682.40px;top:121px;font-size:14px;letter-spacing:0.191px;color:#000000;-webkit-text-stroke:0.15px #000000;">20:56:32</div>
<svg class="r" style="left:176px;top:136px;" width="16" height="16" viewBox="0 0 16 16"><path d="M2.5,0.5 H10.5 L13.5,3.5 V14 Q13.5,14.5 13,14.5 H3 Q2.5,14.5 2.5,14 Z" fill="#e0d7cb" stroke="#c9b8a4" stroke-width="1"/><path d="M10.5,0.5 V3.5 H13.5 Z" fill="#cbb9a5" stroke="#c9b8a4" stroke-width="0.8"/><rect x="4" y="4.8" width="8" height="7.3" fill="#8a8a8a"/><rect x="5.8" y="6.9" width="4" height="8.1" fill="#ffffff"/><rect x="7" y="7" width="1.8" height="2.2" fill="#8a8a8a"/><rect x="7" y="13.1" width="1.8" height="1.4" fill="#b8a590"/></svg>
<div class="t" style="left:195.71px;top:144px;font-size:14px;letter-spacing:0.181px;color:#000000;-webkit-text-stroke:0.15px #000000;">godns-3.0.7_1.pkg</div>
<div class="t" style="left:548.47px;top:144px;font-size:14px;letter-spacing:0.182px;color:#000000;-webkit-text-stroke:0.15px #000000;">3.3</div><div class="t" style="left:572.84px;top:144px;font-size:14px;letter-spacing:-0.036px;color:#000000;-webkit-text-stroke:0.15px #000000;">MiB</div>
<div class="t" style="left:604.40px;top:144px;font-size:14px;letter-spacing:0.244px;color:#000000;-webkit-text-stroke:0.15px #000000;">2024-03-04</div><div class="t" style="left:682.40px;top:144px;font-size:14px;letter-spacing:0.191px;color:#000000;-webkit-text-stroke:0.15px #000000;">20:56:32</div>
<div class="r" style="left:173px;top:156px;width:580px;height:23px;background:#3584e4;"></div>
<svg class="r" style="left:176px;top:159px;" width="16" height="16" viewBox="0 0 16 16"><path d="M2.5,0.5 H10.5 L13.5,3.5 V14 Q13.5,14.5 13,14.5 H3 Q2.5,14.5 2.5,14 Z" fill="#e0d7cb" stroke="#c9b8a4" stroke-width="1"/><path d="M10.5,0.5 V3.5 H13.5 Z" fill="#cbb9a5" stroke="#c9b8a4" stroke-width="0.8"/><rect x="4" y="4.8" width="8" height="7.3" fill="#8a8a8a"/><rect x="5.8" y="6.9" width="4" height="8.1" fill="#ffffff"/><rect x="7" y="7" width="1.8" height="2.2" fill="#8a8a8a"/><rect x="7" y="13.1" width="1.8" height="1.4" fill="#b8a590"/></svg>
<div class="t" style="left:195.71px;top:167px;font-size:14px;letter-spacing:0.243px;color:#ffffff;-webkit-text-stroke:0.15px #ffffff;">godot35-3.5.3_1.pkg</div>
<div class="t" style="left:548.39px;top:167px;font-size:14px;letter-spacing:0.182px;color:#ffffff;-webkit-text-stroke:0.15px #ffffff;">8.9</div><div class="t" style="left:572.84px;top:167px;font-size:14px;letter-spacing:-0.036px;color:#ffffff;-webkit-text-stroke:0.15px #ffffff;">MiB</div>
<div class="t" style="left:604.40px;top:167px;font-size:14px;letter-spacing:0.244px;color:#ffffff;-webkit-text-stroke:0.15px #ffffff;">2024-03-04</div><div class="t" style="left:682.40px;top:167px;font-size:14px;letter-spacing:0.191px;color:#ffffff;-webkit-text-stroke:0.15px #ffffff;">20:56:32</div>
<svg class="r" style="left:176px;top:182px;" width="16" height="16" viewBox="0 0 16 16"><path d="M2.5,0.5 H10.5 L13.5,3.5 V14 Q13.5,14.5 13,14.5 H3 Q2.5,14.5 2.5,14 Z" fill="#e0d7cb" stroke="#c9b8a4" stroke-width="1"/><path d="M10.5,0.5 V3.5 H13.5 Z" fill="#cbb9a5" stroke="#c9b8a4" stroke-width="0.8"/><rect x="4" y="4.8" width="8" height="7.3" fill="#8a8a8a"/><rect x="5.8" y="6.9" width="4" height="8.1" fill="#ffffff"/><rect x="7" y="7" width="1.8" height="2.2" fill="#8a8a8a"/><rect x="7" y="13.1" width="1.8" height="1.4" fill="#b8a590"/></svg>
<div class="t" style="left:195.71px;top:190px;font-size:14px;letter-spacing:0.296px;color:#000000;-webkit-text-stroke:0.15px #000000;">godot35-tools-3.5.3_1.pkg</div>
<div class="t" style="left:532.94px;top:190px;font-size:14px;letter-spacing:0.197px;color:#000000;-webkit-text-stroke:0.15px #000000;">174.5</div><div class="t" style="left:572.84px;top:190px;font-size:14px;letter-spacing:-0.036px;color:#000000;-webkit-text-stroke:0.15px #000000;">MiB</div>
<div class="t" style="left:604.40px;top:190px;font-size:14px;letter-spacing:0.244px;color:#000000;-webkit-text-stroke:0.15px #000000;">2024-03-04</div><div class="t" style="left:682.40px;top:190px;font-size:14px;letter-spacing:0.191px;color:#000000;-webkit-text-stroke:0.15px #000000;">20:56:32</div>
<svg class="r" style="left:176px;top:205px;" width="16" height="16" viewBox="0 0 16 16"><path d="M2.5,0.5 H10.5 L13.5,3.5 V14 Q13.5,14.5 13,14.5 H3 Q2.5,14.5 2.5,14 Z" fill="#e0d7cb" stroke="#c9b8a4" stroke-width="1"/><path d="M10.5,0.5 V3.5 H13.5 Z" fill="#cbb9a5" stroke="#c9b8a4" stroke-width="0.8"/><rect x="4" y="4.8" width="8" height="7.3" fill="#8a8a8a"/><rect x="5.8" y="6.9" width="4" height="8.1" fill="#ffffff"/><rect x="7" y="7" width="1.8" height="2.2" fill="#8a8a8a"/><rect x="7" y="13.1" width="1.8" height="1.4" fill="#b8a590"/></svg>
<div class="t" style="left:195.71px;top:213px;font-size:14px;letter-spacing:0.246px;color:#000000;-webkit-text-stroke:0.15px #000000;">godot-4.1.2_1.pkg</div>
<div class="t" style="left:540.94px;top:213px;font-size:14px;letter-spacing:0.191px;color:#000000;-webkit-text-stroke:0.15px #000000;">15.3</div><div class="t" style="left:572.84px;top:213px;font-size:14px;letter-spacing:-0.036px;color:#000000;-webkit-text-stroke:0.15px #000000;">MiB</div>
<div class="t" style="left:604.40px;top:213px;font-size:14px;letter-spacing:0.244px;color:#000000;-webkit-text-stroke:0.15px #000000;">2024-03-04</div><div class="t" style="left:682.40px;top:213px;font-size:14px;letter-spacing:0.191px;color:#000000;-webkit-text-stroke:0.15px #000000;">20:56:32</div>
<svg class="r" style="left:176px;top:228px;" width="16" height="16" viewBox="0 0 16 16"><path d="M2.5,0.5 H10.5 L13.5,3.5 V14 Q13.5,14.5 13,14.5 H3 Q2.5,14.5 2.5,14 Z" fill="#e0d7cb" stroke="#c9b8a4" stroke-width="1"/><path d="M10.5,0.5 V3.5 H13.5 Z" fill="#cbb9a5" stroke="#c9b8a4" stroke-width="0.8"/><rect x="4" y="4.8" width="8" height="7.3" fill="#8a8a8a"/><rect x="5.8" y="6.9" width="4" height="8.1" fill="#ffffff"/><rect x="7" y="7" width="1.8" height="2.2" fill="#8a8a8a"/><rect x="7" y="13.1" width="1.8" height="1.4" fill="#b8a590"/></svg>
<div class="t" style="left:195.71px;top:236px;font-size:14px;letter-spacing:0.303px;color:#000000;-webkit-text-stroke:0.15px #000000;">godot-tools-4.1.2_1.pkg</div>
<div class="t" style="left:532.30px;top:236px;font-size:14px;letter-spacing:0.197px;color:#000000;-webkit-text-stroke:0.15px #000000;">201.2</div><div class="t" style="left:572.84px;top:236px;font-size:14px;letter-spacing:-0.036px;color:#000000;-webkit-text-stroke:0.15px #000000;">MiB</div>
<div class="t" style="left:604.40px;top:236px;font-size:14px;letter-spacing:0.244px;color:#000000;-webkit-text-stroke:0.15px #000000;">2024-03-04</div><div class="t" style="left:682.40px;top:236px;font-size:14px;letter-spacing:0.191px;color:#000000;-webkit-text-stroke:0.15px #000000;">20:56:32</div>
<svg class="r" style="left:176px;top:251px;" width="16" height="16" viewBox="0 0 16 16"><path d="M2.5,0.5 H10.5 L13.5,3.5 V14 Q13.5,14.5 13,14.5 H3 Q2.5,14.5 2.5,14 Z" fill="#e0d7cb" stroke="#c9b8a4" stroke-width="1"/><path d="M10.5,0.5 V3.5 H13.5 Z" fill="#cbb9a5" stroke="#c9b8a4" stroke-width="0.8"/><rect x="4" y="4.8" width="8" height="7.3" fill="#8a8a8a"/><rect x="5.8" y="6.9" width="4" height="8.1" fill="#ffffff"/><rect x="7" y="7" width="1.8" height="2.2" fill="#8a8a8a"/><rect x="7" y="13.1" width="1.8" height="1.4" fill="#b8a590"/></svg>
<div class="t" style="left:195.71px;top:259px;font-size:14px;letter-spacing:0.274px;color:#000000;-webkit-text-stroke:0.15px #000000;">goesimage-0.1.3_1.pkg</div>
<div class="t" style="left:550.47px;top:259px;font-size:14px;letter-spacing:0.182px;color:#000000;-webkit-text-stroke:0.15px #000000;">3.4</div><div class="t" style="left:574.84px;top:259px;font-size:14px;letter-spacing:0.068px;color:#000000;-webkit-text-stroke:0.15px #000000;">KiB</div>
<div class="t" style="left:604.40px;top:259px;font-size:14px;letter-spacing:0.244px;color:#000000;-webkit-text-stroke:0.15px #000000;">2024-03-04</div><div class="t" style="left:682.40px;top:259px;font-size:14px;letter-spacing:0.191px;color:#000000;-webkit-text-stroke:0.15px #000000;">20:57:00</div>
<svg class="r" style="left:176px;top:274px;" width="16" height="16" viewBox="0 0 16 16"><path d="M2.5,0.5 H10.5 L13.5,3.5 V14 Q13.5,14.5 13,14.5 H3 Q2.5,14.5 2.5,14 Z" fill="#e0d7cb" stroke="#c9b8a4" stroke-width="1"/><path d="M10.5,0.5 V3.5 H13.5 Z" fill="#cbb9a5" stroke="#c9b8a4" stroke-width="0.8"/><rect x="4" y="4.8" width="8" height="7.3" fill="#8a8a8a"/><rect x="5.8" y="6.9" width="4" height="8.1" fill="#ffffff"/><rect x="7" y="7" width="1.8" height="2.2" fill="#8a8a8a"/><rect x="7" y="13.1" width="1.8" height="1.4" fill="#b8a590"/></svg>
<div class="t" style="left:195.71px;top:282px;font-size:14px;letter-spacing:0.305px;color:#000000;-webkit-text-stroke:0.15px #000000;">goffice-0.10.53_2.pkg</div>
<div class="t" style="left:548.30px;top:282px;font-size:14px;letter-spacing:0.182px;color:#000000;-webkit-text-stroke:0.15px #000000;">2.0</div><div class="t" style="left:572.84px;top:282px;font-size:14px;letter-spacing:-0.036px;color:#000000;-webkit-text-stroke:0.15px #000000;">MiB</div>
<div class="t" style="left:604.40px;top:282px;font-size:14px;letter-spacing:0.244px;color:#000000;-webkit-text-stroke:0.15px #000000;">2024-03-04</div><div class="t" style="left:682.40px;top:282px;font-size:14px;letter-spacing:0.191px;color:#000000;-webkit-text-stroke:0.15px #000000;">20:57:00</div>
<svg class="r" style="left:176px;top:297px;" width="16" height="16" viewBox="0 0 16 16"><path d="M2.5,0.5 H10.5 L13.5,3.5 V14 Q13.5,14.5 13,14.5 H3 Q2.5,14.5 2.5,14 Z" fill="#e0d7cb" stroke="#c9b8a4" stroke-width="1"/><path d="M10.5,0.5 V3.5 H13.5 Z" fill="#cbb9a5" stroke="#c9b8a4" stroke-width="0.8"/><rect x="4" y="4.8" width="8" height="7.3" fill="#8a8a8a"/><rect x="5.8" y="6.9" width="4" height="8.1" fill="#ffffff"/><rect x="7" y="7" width="1.8" height="2.2" fill="#8a8a8a"/><rect x="7" y="13.1" width="1.8" height="1.4" fill="#b8a590"/></svg>
<div class="t" style="left:195.71px;top:305px;font-size:14px;letter-spacing:0.364px;color:#000000;-webkit-text-stroke:0.15px #000000;">gofish-1.1.pkg</div>
<div class="t" style="left:542.47px;top:305px;font-size:14px;letter-spacing:0.191px;color:#000000;-webkit-text-stroke:0.15px #000000;">35.2</div><div class="t" style="left:574.84px;top:305px;font-size:14px;letter-spacing:0.068px;color:#000000;-webkit-text-stroke:0.15px #000000;">KiB</div>
<div class="t" style="left:604.40px;top:305px;font-size:14px;letter-spacing:0.244px;color:#000000;-webkit-text-stroke:0.15px #000000;">2023-12-30</div><div class="t" style="left:682.40px;top:305px;font-size:14px;letter-spacing:0.191px;color:#000000;-webkit-text-stroke:0.15px #000000;">22:35:57</div>
<svg class="r" style="left:176px;top:320px;" width="16" height="16" viewBox="0 0 16 16"><path d="M2.5,0.5 H10.5 L13.5,3.5 V14 Q13.5,14.5 13,14.5 H3 Q2.5,14.5 2.5,14 Z" fill="#e0d7cb" stroke="#c9b8a4" stroke-width="1"/><path d="M10.5,0.5 V3.5 H13.5 Z" fill="#cbb9a5" stroke="#c9b8a4" stroke-width="0.8"/><rect x="4" y="4.8" width="8" height="7.3" fill="#8a8a8a"/><rect x="5.8" y="6.9" width="4" height="8.1" fill="#ffffff"/><rect x="7" y="7" width="1.8" height="2.2" fill="#8a8a8a"/><rect x="7" y="13.1" width="1.8" height="1.4" fill="#b8a590"/></svg>
<div class="t" style="left:195.71px;top:328px;font-size:14px;letter-spacing:0.387px;color:#000000;-webkit-text-stroke:0.15px #000000;">gofont-ttf-g20180511_1.pkg</div>
<div class="t" style="left:534.47px;top:328px;font-size:14px;letter-spacing:0.197px;color:#000000;-webkit-text-stroke:0.15px #000000;">359.9</div><div class="t" style="left:574.84px;top:328px;font-size:14px;letter-spacing:0.068px;color:#000000;-webkit-text-stroke:0.15px #000000;">KiB</div>
<div class="t" style="left:604.40px;top:328px;font-size:14px;letter-spacing:0.244px;color:#000000;-webkit-text-stroke:0.15px #000000;">2024-03-04</div><div class="t" style="left:682.40px;top:328px;font-size:14px;letter-spacing:0.191px;color:#000000;-webkit-text-stroke:0.15px #000000;">20:57:00</div>
<svg class="r" style="left:176px;top:343px;" width="16" height="16" viewBox="0 0 16 16"><path d="M2.5,0.5 H10.5 L13.5,3.5 V14 Q13.5,14.5 13,14.5 H3 Q2.5,14.5 2.5,14 Z" fill="#e0d7cb" stroke="#c9b8a4" stroke-width="1"/><path d="M10.5,0.5 V3.5 H13.5 Z" fill="#cbb9a5" stroke="#c9b8a4" stroke-width="0.8"/><rect x="4" y="4.8" width="8" height="7.3" fill="#8a8a8a"/><rect x="5.8" y="6.9" width="4" height="8.1" fill="#ffffff"/><rect x="7" y="7" width="1.8" height="2.2" fill="#8a8a8a"/><rect x="7" y="13.1" width="1.8" height="1.4" fill="#b8a590"/></svg>
<div class="t" style="left:195.71px;top:351px;font-size:14px;letter-spacing:0.391px;color:#000000;-webkit-text-stroke:0.15px #000000;">gogglesmm-1.2.5.pkg</div>
<div class="t" style="left:535.44px;top:351px;font-size:14px;letter-spacing:0.197px;color:#000000;-webkit-text-stroke:0.15px #000000;">597.6</div><div class="t" style="left:574.84px;top:351px;font-size:14px;letter-spacing:0.068px;color:#000000;-webkit-text-stroke:0.15px #000000;">KiB</div>
<div class="t" style="left:604.40px;top:351px;font-size:14px;letter-spacing:0.244px;color:#000000;-webkit-text-stroke:0.15px #000000;">2024-03-04</div><div class="t" style="left:682.40px;top:351px;font-size:14px;letter-spacing:0.191px;color:#000000;-webkit-text-stroke:0.15px #000000;">20:56:32</div>
<svg class="r" style="left:176px;top:366px;" width="16" height="16" viewBox="0 0 16 16"><path d="M2.5,0.5 H10.5 L13.5,3.5 V14 Q13.5,14.5 13,14.5 H3 Q2.5,14.5 2.5,14 Z" fill="#e0d7cb" stroke="#c9b8a4" stroke-width="1"/><path d="M10.5,0.5 V3.5 H13.5 Z" fill="#cbb9a5" stroke="#c9b8a4" stroke-width="0.8"/><rect x="4" y="4.8" width="8" height="7.3" fill="#8a8a8a"/><rect x="5.8" y="6.9" width="4" height="8.1" fill="#ffffff"/><rect x="7" y="7" width="1.8" height="2.2" fill="#8a8a8a"/><rect x="7" y="13.1" width="1.8" height="1.4" fill="#b8a590"/></svg>
<div class="t" style="left:195.71px;top:374px;font-size:14px;letter-spacing:0.208px;color:#000000;-webkit-text-stroke:0.15px #000000;">gogrepo-0.3a_3.pkg</div>
<div class="t" style="left:542.94px;top:374px;font-size:14px;letter-spacing:0.191px;color:#000000;-webkit-text-stroke:0.15px #000000;">14.7</div><div class="t" style="left:574.84px;top:374px;font-size:14px;letter-spacing:0.068px;color:#000000;-webkit-text-stroke:0.15px #000000;">KiB</div>
<div class="t" style="left:604.40px;top:374px;font-size:14px;letter-spacing:0.244px;color:#000000;-webkit-text-stroke:0.15px #000000;">2024-03-04</div><div class="t" style="left:682.40px;top:374px;font-size:14px;letter-spacing:0.191px;color:#000000;-webkit-text-stroke:0.15px #000000;">20:57:00</div>
<svg class="r" style="left:176px;top:389px;" width="16" height="16" viewBox="0 0 16 16"><path d="M2.5,0.5 H10.5 L13.5,3.5 V14 Q13.5,14.5 13,14.5 H3 Q2.5,14.5 2.5,14 Z" fill="#e0d7cb" stroke="#c9b8a4" stroke-width="1"/><path d="M10.5,0.5 V3.5 H13.5 Z" fill="#cbb9a5" stroke="#c9b8a4" stroke-width="0.8"/><rect x="4" y="4.8" width="8" height="7.3" fill="#8a8a8a"/><rect x="5.8" y="6.9" width="4" height="8.1" fill="#ffffff"/><rect x="7" y="7" width="1.8" height="2.2" fill="#8a8a8a"/><rect x="7" y="13.1" width="1.8" height="1.4" fill="#b8a590"/></svg>
<div class="t" style="left:195.71px;top:397px;font-size:14px;letter-spacing:0.183px;color:#000000;-webkit-text-stroke:0.15px #000000;">gogs-0.12.11_6.pkg</div>
<div class="t" style="left:540.30px;top:397px;font-size:14px;letter-spacing:0.191px;color:#000000;-webkit-text-stroke:0.15px #000000;">22.8</div><div class="t" style="left:572.84px;top:397px;font-size:14px;letter-spacing:-0.036px;color:#000000;-webkit-text-stroke:0.15px #000000;">MiB</div>
<div class="t" style="left:604.40px;top:397px;font-size:14px;letter-spacing:0.244px;color:#000000;-webkit-text-stroke:0.15px #000000;">2024-03-04</div><div class="t" style="left:682.40px;top:397px;font-size:14px;letter-spacing:0.191px;color:#000000;-webkit-text-stroke:0.15px #000000;">20:56:32</div>
</div>
<div class="r" style="left:173px;top:544px;width:580px;height:1px;background:#d5d0cb;"></div>
<div class="r" style="left:173px;top:545px;width:580px;height:25px;background:#f6f5f4;"></div>
<div class="t" style="left:188.01px;top:557px;font-size:14px;letter-spacing:0.318px;color:#2e3436;-webkit-text-stroke:0.15px #2e3436;white-space:pre;">&quot;godot35-3.5.3_1.pkg&quot;</div><div class="t" style="left:340.35px;top:557px;font-size:14px;letter-spacing:0.359px;color:#2e3436;-webkit-text-stroke:0.15px #2e3436;white-space:pre;">|</div><div class="t" style="left:351.99px;top:557px;font-size:14px;letter-spacing:0.182px;color:#2e3436;-webkit-text-stroke:0.15px #2e3436;white-space:pre;">8.9</div><div class="t" style="left:376.44px;top:557px;font-size:14px;letter-spacing:-0.036px;color:#2e3436;-webkit-text-stroke:0.15px #2e3436;white-space:pre;">MiB</div><div class="t" style="left:404.73px;top:557px;font-size:14px;letter-spacing:0.209px;color:#2e3436;-webkit-text-stroke:0.15px #2e3436;white-space:pre;">(9,374,028</div><div class="t" style="left:477.69px;top:557px;font-size:14px;letter-spacing:0.482px;color:#2e3436;-webkit-text-stroke:0.15px #2e3436;white-space:pre;">bytes)</div><div class="t" style="left:526.35px;top:557px;font-size:14px;letter-spacing:0.359px;color:#2e3436;-webkit-text-stroke:0.15px #2e3436;white-space:pre;">|</div><div class="t" style="left:538.29px;top:557px;font-size:14px;letter-spacing:-0.599px;color:#2e3436;-webkit-text-stroke:0.15px #2e3436;white-space:pre;">XAR</div><div class="t" style="left:569.01px;top:557px;font-size:14px;letter-spacing:0.413px;color:#2e3436;-webkit-text-stroke:0.15px #2e3436;white-space:pre;">archive</div>
<div class="r" style="left:0px;top:740px;width:1024px;height:28px;background:#f6f5f4;"></div>
<div class="r" style="left:0px;top:740px;width:1024px;height:1px;background:#cdc8c3;"></div>
<svg class="r" style="left:0px;top:742px" width="20" height="24" viewBox="0 742 20 24"><path d="M14.6,746.9 C11,746.3 6.5,748.5 3.6,752.3 C1.8,754.9 3.2,756.6 5.6,755.8 L10.8,755.2" fill="none" stroke="#13a0c6" stroke-width="1.5" stroke-linecap="round" stroke-linejoin="round"/><path d="M14.6,746.9 C15,748.2 12.5,749.6 10.2,749.9 L12.3,749.7 L2.6,761.3" fill="none" stroke="#13a0c6" stroke-width="1.6" stroke-linecap="round" stroke-linejoin="round"/></svg>
<div class="t" style="left:20.87px;top:754px;font-size:14px;letter-spacing:0.378px;color:#2e3436;-webkit-text-stroke:0.15px #2e3436;">Applications</div>
<div class="r" style="left:104px;top:749px;width:4px;height:1px;background:#8a8a8a;"></div>
<div class="r" style="left:104px;top:753px;width:4px;height:1px;background:#8a8a8a;"></div>
<div class="r" style="left:104px;top:757px;width:4px;height:1px;background:#8a8a8a;"></div>
<div class="r" style="left:110px;top:741px;width:200px;height:28px;background:#d6d2cd;border-radius:5px;"></div>
<svg class="r" style="left:114px;top:746px;" width="16" height="16" viewBox="0 0 16 16"><path d="M0.5,2 Q0.5,0.5 2,0.5 H7 L9,2.5 H14 Q15.5,2.5 15.5,4 V14 Q15.5,15.5 14,15.5 H2 Q0.5,15.5 0.5,14 Z" fill="#c9b9a7" stroke="#a08d7a" stroke-width="1"/><path d="M1,5.5 H7.5 L9.5,3.5 H15 V15 H1 Z" fill="#ded5ca"/><path d="M1,5.5 H7.5 L9.5,3.5 H15" fill="none" stroke="#a89683" stroke-width="1"/></svg>
<div class="t" style="left:140.17px;top:754px;font-size:14px;letter-spacing:0.479px;color:#2e3436;-webkit-text-stroke:0.15px #2e3436;">All</div><div class="t" style="left:160.57px;top:754px;font-size:14px;letter-spacing:0.344px;color:#2e3436;-webkit-text-stroke:0.15px #2e3436;">-</div><div class="t" style="left:168.89px;top:754px;font-size:14px;letter-spacing:0.112px;color:#2e3436;-webkit-text-stroke:0.15px #2e3436;">Thunar</div>
<div class="r" style="left:310px;top:741px;width:200px;height:26px;background:#f3f2f0;border:1px solid #d0cbc6;border-radius:5px;box-sizing:border-box;"></div>
<svg class="r" style="left:314px;top:746px;" width="16" height="16" viewBox="0 0 16 16"><path d="M0.5,2 Q0.5,0.5 2,0.5 H7 L9,2.5 H14 Q15.5,2.5 15.5,4 V14 Q15.5,15.5 14,15.5 H2 Q0.5,15.5 0.5,14 Z" fill="#c9b9a7" stroke="#a08d7a" stroke-width="1"/><path d="M1,5.5 H7.5 L9.5,3.5 H15 V15 H1 Z" fill="#ded5ca"/><path d="M1,5.5 H7.5 L9.5,3.5 H15" fill="none" stroke="#a89683" stroke-width="1"/></svg>
<div class="t" style="left:339.01px;top:754px;font-size:14px;letter-spacing:0.267px;color:#2e3436;-webkit-text-stroke:0.15px #2e3436;">ghostbsdrepo</div><div class="t" style="left:430.98px;top:754px;font-size:14px;letter-spacing:0.344px;color:#2e3436;-webkit-text-stroke:0.15px #2e3436;">-</div><div class="t" style="left:439.29px;top:754px;font-size:14px;letter-spacing:0.112px;color:#2e3436;-webkit-text-stroke:0.15px #2e3436;">Thunar</div>
<svg class="r" style="left:806px;top:744px" width="22" height="20" viewBox="806 744 22 20"><path d="M819.6,750.4 L822.8,747.2" stroke="#44aef0" stroke-width="3.4" stroke-linecap="round"/><path d="M816.6,753.2 L818.8,751.2" stroke="#44aef0" stroke-width="1.4"/><path d="M810.6,759.8 L813.8,756.6" stroke="#44aef0" stroke-width="3.4" stroke-linecap="round"/><path d="M814.6,755.4 L816.4,753.6" stroke="#44aef0" stroke-width="1.4"/><path d="M819.8,756.8 L823,760 M823,756.8 L819.8,760" stroke="#e23b3f" stroke-width="1.5"/></svg>
<div class="r" style="left:829px;top:741px;width:36px;height:27px;background:#b5afa9;"></div>
<div class="r" style="left:829px;top:741px;width:27px;height:20px;background:#d5d0cb;border:2px solid #2e2e2e;box-sizing:border-box;"></div>
<svg class="r" style="left:834px;top:743px;" width="16" height="16" viewBox="0 0 16 16"><path d="M0.5,2 Q0.5,0.5 2,0.5 H7 L9,2.5 H14 Q15.5,2.5 15.5,4 V14 Q15.5,15.5 14,15.5 H2 Q0.5,15.5 0.5,14 Z" fill="#c9b9a7" stroke="#a08d7a" stroke-width="1"/><path d="M1,5.5 H7.5 L9.5,3.5 H15 V15 H1 Z" fill="#ded5ca"/><path d="M1,5.5 H7.5 L9.5,3.5 H15" fill="none" stroke="#a89683" stroke-width="1"/></svg>
<div class="r" style="left:856px;top:741px;width:9px;height:13px;background:#7a756f;"></div>
<div class="r" style="left:855px;top:754px;width:10px;height:14px;background:#b4aea8;border:2px solid #2e2e2e;box-sizing:border-box;"></div>
<div class="r" style="left:829px;top:762px;width:27px;height:6px;background:#b9b3ad;border:2px solid #2e2e2e;box-sizing:border-box;"></div>
<div class="r" style="left:864px;top:741px;width:37px;height:27px;background:#a9a7a4;"></div>
<div class="t" style="left:902.92px;top:749px;font-size:11.5px;letter-spacing:0.522px;color:#2e3436;-webkit-text-stroke:0.15px #2e3436;">2026-02-06</div>
<div class="t" style="left:919.33px;top:762px;font-size:11.5px;letter-spacing:0.650px;color:#2e3436;-webkit-text-stroke:0.15px #2e3436;">12:38</div>
<svg class="r" style="left:970px;top:742px" width="20" height="24" viewBox="970 742 20 24"><path d="M982.1,747 Q983.5,747 984,748.2 Q986.6,749.5 986.6,753 V756 L988.4,758.8 H975.8 L977.6,756 V753 Q977.6,749.5 980.2,748.2 Q980.7,747 982.1,747 Z" fill="#2e3436"/><path d="M980.1,759.9 H984.1 Q983.6,761.5 982.1,761.5 Q980.6,761.5 980.1,759.9 Z" fill="#2e3436"/></svg>
<div class="r" style="left:996px;top:741px;width:1px;height:27px;background:#dcd8d4;"></div>
<svg class="r" style="left:1000px;top:744px" width="20" height="20" viewBox="1000 744 20 20"><circle cx="1010" cy="753.8" r="7.1" fill="#1a2b38"/><rect x="1006.8" y="749.8" width="6.6" height="8.2" rx="1.4" fill="none" stroke="#c9ced3" stroke-width="1.6"/><path d="M1012.6,752.2 H1008.6 V755.6 H1012.6" fill="none" stroke="#1a2b38" stroke-width="1.2"/><path d="M1010.6,752.6 L1011.6,753.8 L1010.6,755 L1009.8,753.8 Z" fill="#dfe3e6"/><rect x="1011.2" y="752.8" width="1.8" height="2.2" fill="#9aa2a8"/></svg>
</div></body></html>
